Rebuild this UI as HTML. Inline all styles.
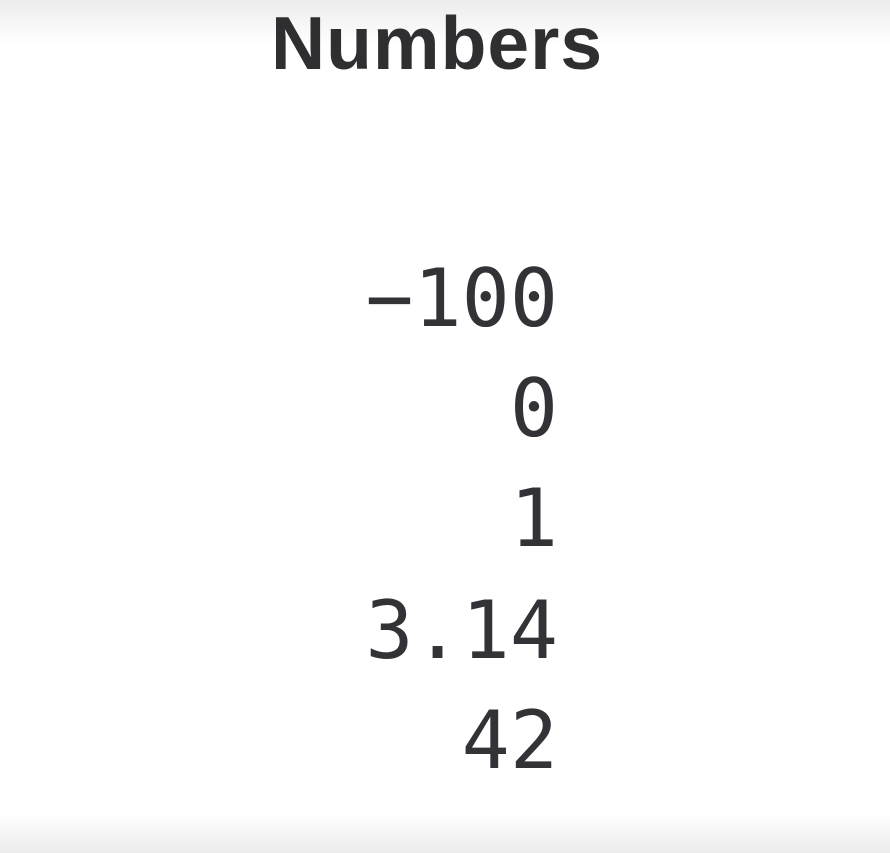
<!DOCTYPE html>
<html><head><meta charset="utf-8"><style>
html,body{margin:0;padding:0;width:890px;height:853px;overflow:hidden;background:#fff;position:relative}
.top{position:absolute;left:0;top:0;width:890px;height:45px;background:linear-gradient(#ececec,#fff)}
.bot{position:absolute;left:0;bottom:0;width:890px;height:40px;background:linear-gradient(#fff,#ececec)}
.t{position:absolute;left:0;width:874px;text-align:center;font:bold 75px/1 "Liberation Sans",sans-serif;color:#2f2e31;letter-spacing:1px;top:6px}
.n{position:absolute;right:332px;font:80px/1 "DejaVu Sans Mono",monospace;color:#333236;white-space:pre}
</style></head><body>
<div class="top"></div><div class="bot"></div>
<div class="t">Numbers</div>
<div class="n" style="top:259px">−100</div>
<div class="n" style="top:369px">0</div>
<div class="n" style="top:479px">1</div>
<div class="n" style="top:591px">3.14</div>
<div class="n" style="top:701px">42</div>
</body></html>
